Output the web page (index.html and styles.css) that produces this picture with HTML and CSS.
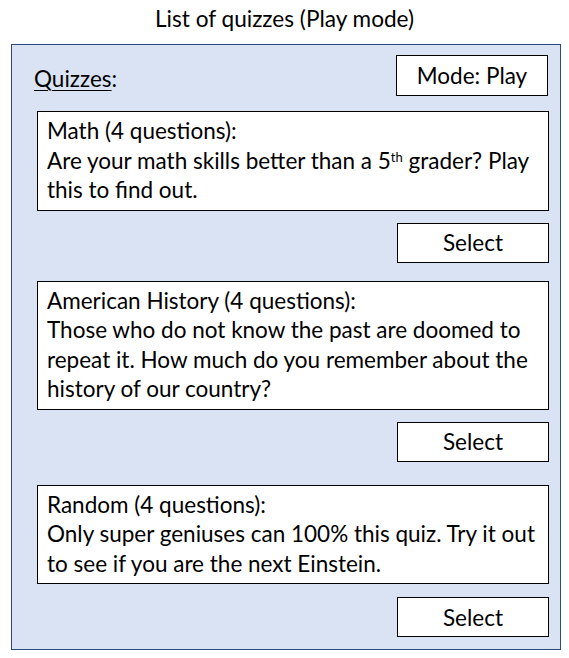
FILE: index.html
```html
<!DOCTYPE html>
<html lang="en">
<head>
<meta charset="utf-8">
<title>List of quizzes (Play mode)</title>
<link rel="stylesheet" href="styles.css">
</head>
<body>
  <h1 class="page-title">List of quizzes (Play mode)</h1>
  <main class="panel">
    <div class="panel-header">
      <div class="panel-label"><span class="panel-label-text">Quizzes</span>:</div>
      <div class="mode-box">Mode: Play</div>
    </div>
    <section class="quiz">
      <div class="quiz-card">
        <div class="quiz-title">Math (4 questions):</div>
        <div class="quiz-desc">Are your math skills better than a 5<span class="ord">th</span> grader? Play this to find out.</div>
      </div>
      <div class="quiz-actions"><div class="select-btn">Select</div></div>
    </section>
    <section class="quiz">
      <div class="quiz-card">
        <div class="quiz-title">American History (4 questions):</div>
        <div class="quiz-desc">Those who do not know the past are doomed to repeat it. How much do you remember about the history of our country?</div>
      </div>
      <div class="quiz-actions"><div class="select-btn">Select</div></div>
    </section>
    <section class="quiz quiz-spaced">
      <div class="quiz-card">
        <div class="quiz-title">Random (4 questions):</div>
        <div class="quiz-desc">Only super geniuses can 100% this quiz. Try it out to see if you are the next Einstein.</div>
      </div>
      <div class="quiz-actions quiz-actions-wide"><div class="select-btn">Select</div></div>
    </section>
  </main>
</body>
</html>
```
FILE: styles.css
```css
* { box-sizing: border-box; }
html, body { margin: 0; padding: 0; background: #ffffff; }
body {
  font-family: Lato, "Open Sans", "Liberation Sans", sans-serif;
  color: #000;
  font-size: 22.5px;
  width: 569px;
  height: 658px;
  overflow: hidden;
}
.page-title {
  margin: 0;
  height: 44px;
  padding-top: 4px;
  font-size: 22.6px;
  font-weight: 400;
  text-align: center;
  line-height: 30px;
}
.panel {
  margin-left: 11px;
  width: 550px;
  height: 606px;
  background: #dae3f3;
  border: 1px solid #2f4a7a;
  padding: 10px 11px 10px 25px;
  display: flex;
  flex-direction: column;
}
.panel-header {
  display: flex;
  justify-content: space-between;
  align-items: center;
  margin-left: -3px;
  height: 41px;
}
.panel-label { line-height: 30px; padding-top: 6px; }
.panel-label-text { text-decoration: underline; text-underline-offset: 3px; text-decoration-thickness: 1px; }
.mode-box {
  width: 152px;
  height: 41px;
  background: #fff;
  border: 1px solid #000;
  display: flex;
  align-items: center;
  justify-content: center;
  margin-right: 1px;
}
.quiz { display: flex; flex-direction: column; margin-top: 15px; }
.quiz + .quiz { margin-top: 18px; }
.quiz + .quiz-spaced { margin-top: 23px; }
.quiz-card {
  background: #fff;
  border: 1px solid #000;
  padding: 4px 3px 5px 9px;
  line-height: 29.5px;
}
.quiz-actions { display: flex; justify-content: flex-end; margin-top: 12px; }
.quiz-actions-wide { margin-top: 13px; }
.select-btn {
  width: 152px;
  height: 40px;
  background: #fff;
  border: 1px solid #000;
  display: flex;
  align-items: center;
  justify-content: center;
}
.ord {
  display: inline-block;
  font-size: 13px;
  line-height: 13px;
  vertical-align: 7px;
}
```
